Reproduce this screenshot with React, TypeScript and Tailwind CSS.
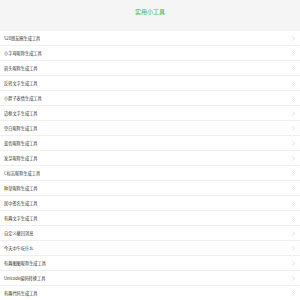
import React from 'react';

const tools = [
  '520朋友圈生成工具',
  '小字母昵称生成工具',
  '箭头昵称生成工具',
  '反转文字生成工具',
  '小胖子表情生成工具',
  '边框文字生成工具',
  '空白昵称生成工具',
  '蓝色昵称生成工具',
  '发芽昵称生成工具',
  'C标志昵称生成工具',
  '种草昵称生成工具',
  '居中签名生成工具',
  '有趣文字生成工具',
  '自定义撤回消息',
  '今天中午吃什么',
  '有趣图图昵称生成工具',
  'Unicode编码转换工具',
  '有趣代码生成工具',
];

const App = () => {
  return (
    <div
      className="w-[300px] h-[300px] overflow-hidden bg-white"
      style={{ fontFamily: '"Noto Sans CJK SC", "Liberation Sans", sans-serif' }}
    >
      {/* Header */}
      <div className="h-[31px] bg-[#f5f5f5] flex items-center justify-center pb-[7px]">
        <h1 className="text-[6px] leading-none font-medium text-[#5cb85c]">实用小工具</h1>
      </div>

      {/* Tool list */}
      <ul>
        {tools.map((name) => (
          <li
            key={name}
            className="h-[15px] flex items-center justify-between pl-[4px] pr-[5px] border-b border-[#efefef]"
          >
            <span className="text-[4.2px] leading-none text-[#333]">{name}</span>
            <svg width="3" height="5" viewBox="0 0 3 5" className="text-[#c8c8c8]">
              <path d="M0.5 0.5 L2.5 2.5 L0.5 4.5" fill="none" stroke="currentColor" strokeWidth="0.6" />
            </svg>
          </li>
        ))}
      </ul>
    </div>
  );
};

export default App;
